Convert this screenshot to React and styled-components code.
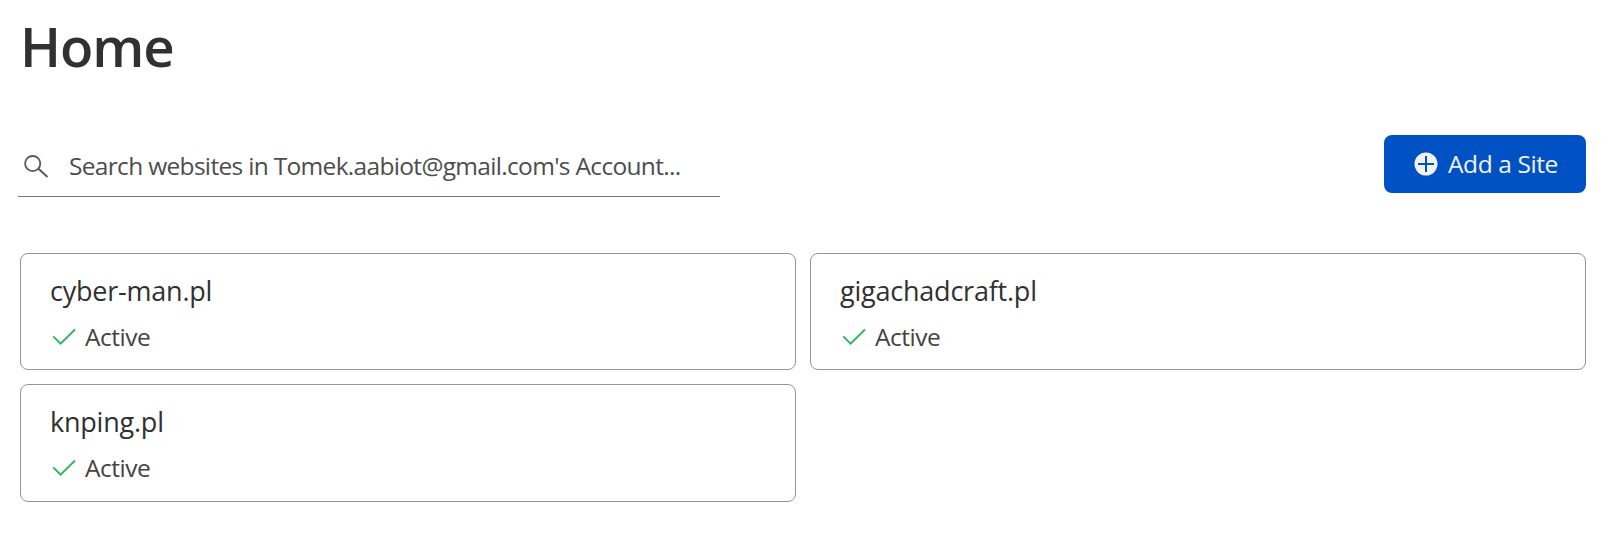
import React from "react";
import styled, { createGlobalStyle } from "styled-components";

const GlobalStyle = createGlobalStyle`
  * { box-sizing: border-box; }
  body {
    margin: 0;
    background: #fff;
    color: #313131;
    font-family: "Segoe UI", "Open Sans", "Noto Sans", sans-serif;
  }
`;

const Page = styled.main`
  height: 541px;
  padding: 16px 38px 0 20px;
`;

const Title = styled.h1`
  margin: 0;
  font-size: 54.6px;
  line-height: 60px;
  font-weight: 600;
  letter-spacing: -1.1px;
`;

const Toolbar = styled.div`
  display: flex;
  align-items: flex-start;
  justify-content: space-between;
  margin-top: 59px;
`;

const SearchField = styled.label`
  display: flex;
  align-items: center;
  width: 702px;
  height: 62px;
  margin-left: -2px;
  padding-left: 5px;
  border-bottom: 1px solid #76767a;
  color: #4d4d4d;
`;

const SearchInput = styled.input`
  flex: 1;
  min-width: 0;
  height: 40px;
  margin-left: 20px;
  padding: 0;
  border: 0;
  outline: 0;
  background: none;
  font: 24.5px/40px "Open Sans", "Noto Sans", sans-serif;
  letter-spacing: -0.68px;
  &::placeholder { color: #4d4d4d; opacity: 1; }
`;

const AddButton = styled.button`
  display: flex;
  align-items: center;
  width: 202px;
  height: 58px;
  padding: 0 0 0 30px;
  gap: 10px;
  border: 0;
  border-radius: 8px;
  background: #0051c3;
  color: #f2f2f2;
  font: 24.5px/40px "Open Sans", "Noto Sans", sans-serif;
  letter-spacing: -0.4px;
  white-space: nowrap;
`;

const Sites = styled.section`
  display: grid;
  grid-template-columns: 1fr 1fr;
  grid-template-rows: 117px 118px;
  gap: 14px;
  margin-top: 56px;
`;

const Card = styled.article`
  padding: 19px 29px 0;
  border: 1px solid #949497;
  border-radius: 8px;
`;

const SiteName = styled.h2`
  margin: 0;
  font-size: 27px;
  line-height: 36px;
  font-weight: 400;
  letter-spacing: -0.22px;
`;

const Status = styled.div`
  display: flex;
  align-items: center;
  gap: 9px;
  margin-top: 10px;
  padding-left: 2px;
  color: #434343;
  font-size: 24.5px;
  line-height: 36px;
  letter-spacing: -0.5px;
`;

const SearchIcon = () => (
  <svg width="26" height="26" viewBox="0 -1 26 26" fill="none" stroke="#595959" strokeWidth="1.8">
    <circle cx="9.7" cy="9.6" r="7.6" />
    <path d="M15.2 14.6 24.5 23" strokeWidth="2" />
  </svg>
);

const PlusIcon = () => (
  <svg width="24" height="24" viewBox="0 0 24 24">
    <circle cx="12" cy="12" r="11.5" fill="#f2f2f2" />
    <path d="M12 4v16M4 12h16" stroke="#0051c3" strokeWidth="2" />
  </svg>
);

const CheckIcon = () => (
  <svg width="24" height="18" viewBox="0 0 24 18" fill="none" stroke="#2db35e" strokeWidth="1.8">
    <path d="M1.2 8.3 8.6 15.7 23 1.5" />
  </svg>
);

const sites = ["cyber-man.pl", "gigachadcraft.pl", "knping.pl"];

export default function App() {
  return (
    <>
      <GlobalStyle />
      <Page>
        <Title>Home</Title>
        <Toolbar>
          <SearchField>
            <SearchIcon />
            <SearchInput placeholder="Search websites in Tomek.aabiot@gmail.com's Account..." />
          </SearchField>
          <AddButton>
            <PlusIcon />
            Add a Site
          </AddButton>
        </Toolbar>
        <Sites>
          {sites.map((name) => (
            <Card key={name}>
              <SiteName>{name}</SiteName>
              <Status>
                <CheckIcon />
                Active
              </Status>
            </Card>
          ))}
        </Sites>
      </Page>
    </>
  );
}
